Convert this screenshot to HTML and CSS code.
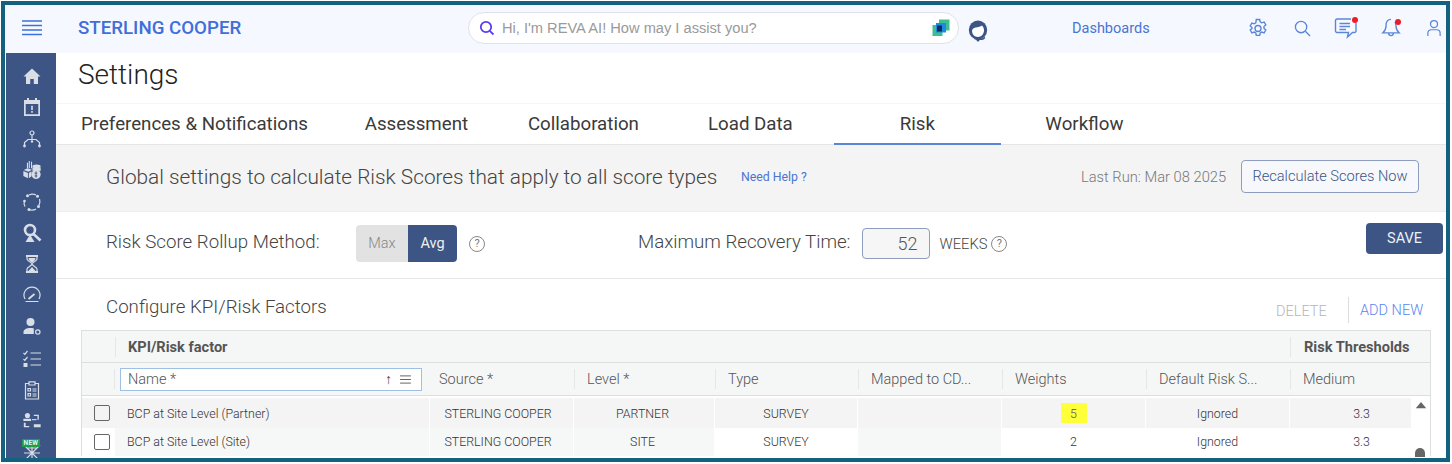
FILE: index.html
```html
<!DOCTYPE html>
<html lang="en">
<head>
<meta charset="utf-8">
<title>Settings</title>
<link rel="stylesheet" href="styles.css">
</head>
<body>
<div class="frame">
  <header class="topbar">
    <svg class="burger" viewBox="0 0 20 16"><path d="M0 1h20M0 5.500h20M0 10h20M0 14.500h20"/></svg>
    <div class="brand">STERLING COOPER</div>
    <div class="search">
      <svg class="search-q" viewBox="0 0 16 16"><circle cx="7" cy="7" r="5.200"/><path d="M10.800 10.800L14.500 14.500"/></svg>
      <span class="search-text">Hi, I'm REVA AI! How may I assist you?</span>
      <svg class="search-logo" viewBox="0 0 18 18"><rect x="0.500" y="6" width="10" height="11" fill="#3fbf8f"/><rect x="7" y="0.500" width="10.500" height="11" fill="#3fbf8f"/><rect x="4" y="4" width="10" height="9.500" fill="#1e88e5"/><rect x="5" y="6.500" width="5" height="6" fill="#0d2b5c"/></svg>
    </div>
    <svg class="agent" viewBox="0 0 20 22"><ellipse cx="10" cy="10" rx="9.200" ry="9.500" fill="#3c5585"/><path fill="#fff" d="M4 11c0-2 1.500-3.300 3.500-3.600 2.800-.4 5-1 6.500-2 1.500 1.500 2.200 3.500 2 5.600-.3 3-2.800 6-6 6-3.500 0-6-3-6-6z"/><path fill="#3c5585" d="M6 20h8c1.500 0 2.800-1 3.300-2.500l-1.300-.7c-.5 1-1.400 1.700-2.500 1.700H10z"/><circle cx="10" cy="20" r="1.500" fill="#3c5585"/></svg>
    <a class="dash">Dashboards</a>
    <div class="top-icons">
      <svg class="ti gear" viewBox="0 0 20 20"><path d="M8.300 1.500h3.400l.5 2.400 1.600.9 2.300-.8 1.700 2.900-1.800 1.600v1.900l1.800 1.600-1.700 2.900-2.300-.8-1.600.9-.5 2.400H8.300l-.5-2.400-1.600-.9-2.300.8-1.700-2.900 1.800-1.600V9.500L2.200 7.900l1.700-2.900 2.300.8 1.600-.9z"/><circle cx="10" cy="10.500" r="3"/></svg>
      <svg class="ti mag" viewBox="0 0 18 18"><circle cx="7.500" cy="7.500" r="6"/><path d="M12 12l5 5"/></svg>
      <span class="ti-wrap chat">
        <svg class="ti" viewBox="0 0 24 22"><path d="M17 2H3a1.500 1.500 0 0 0-1.500 1.500V14A1.500 1.500 0 0 0 3 15.500h11.500l-1 4.500 5-4.500h2A1.500 1.500 0 0 0 22 14V6M5.500 6.500H16M5.500 9.500H16M5.500 12.500H12"/></svg>
        <i class="dot"></i>
      </span>
      <span class="ti-wrap bell">
        <svg class="ti" viewBox="0 0 20 22"><path d="M10 1.500C6.500 1.500 4.800 4.500 4.800 8c0 3.500-1 5.500-3.300 7.500h17c-2.300-2-3.300-4-3.300-7.500 0-1.500-.3-2.800-1-4M7.500 15.700c0 3.600 5 3.600 5 0"/></svg>
        <i class="dot"></i>
      </span>
      <svg class="ti user" viewBox="0 0 16 20"><circle cx="8" cy="5.500" r="4"/><path d="M1 19v-3c0-2.500 2-4 4-4h6c2 0 4 1.500 4 4v3"/></svg>
    </div>
  </header>

  <div class="body">
    <nav class="sidebar">
      <svg viewBox="0 0 20 20"><path class="f" d="M10 2.500L1.500 10.500H4V18h4.200v-5h3.600v5H16v-7.500h2.500z"/></svg>
      <svg viewBox="0 0 20 20"><path class="f" d="M5 1h2v2h6V1h2v2h3v16H2V3h3zM3.700 7v10.300h12.600V7z"/><path class="f" d="M9.200 8.800h1.600v4.200H9.200zM9.200 14h1.600v1.800H9.200z"/></svg>
      <svg viewBox="0 0 20 20"><circle class="s" cx="10" cy="4" r="2"/><path class="s" d="M10 6v4M2.500 16v-2.500L6 10.500h8l3.500 3v2.500"/><circle class="f" cx="2.500" cy="17" r="1.400"/><circle class="f" cx="10" cy="12.500" r="1.200"/><circle class="f" cx="17.500" cy="17" r="1.400"/></svg>
      <svg viewBox="0 0 22 22"><path class="s" d="M8 1v8M10.500 2v7M6 3v6"/><ellipse class="f" cx="16" cy="7" rx="4.500" ry="2"/><path class="f" d="M11.500 8v4h9V8z"/><path class="f" d="M6 9l5 1.800-4 2.200-5-2zM1.500 12l5 2.200V20l-5-2.500zM7.500 14.200l3-1.700v5.500l-3 2z"/><circle class="f" cx="15.500" cy="16" r="5"/><path class="b" d="M15.500 12.500v7M13.800 14.500h3M13.800 17.500h3"/></svg>
      <svg viewBox="0 0 20 20"><path class="s" d="M7 3a8 8 0 0 1 7 0M17.500 7a8 8 0 0 1-.5 6.500M14 17a8 8 0 0 1-7 .500M3 14.500a8 8 0 0 1-.5-6"/><circle class="f" cx="5.500" cy="3.800" r="1.500"/><circle class="f" cx="15.500" cy="4.300" r="1.500"/><circle class="f" cx="16.500" cy="14.500" r="1.500"/><circle class="f" cx="7" cy="17.500" r="1.500"/><circle class="f" cx="2.500" cy="9" r="1.300"/></svg>
      <svg viewBox="0 0 20 20"><circle class="thick" cx="8" cy="7" r="5"/><path class="thick" d="M11.500 11l7 6.500"/><path class="f" d="M8 11.500l4.500 7.500h-9z"/></svg>
      <svg viewBox="0 0 20 20"><path class="thick2" d="M4 2h12M4 18h12"/><path class="s" d="M5 2v3c0 2 5 3.500 5 5s-5 3-5 5v3M15 2v3c0 2-5 3.500-5 5s5 3 5 5v3"/><path class="f" d="M6 17.500L10 13l4 4.500z"/><path class="f" d="M6.500 4h7c0 2-2 3.500-3.500 4.500C8.500 7.500 6.500 6 6.500 4z"/></svg>
      <svg viewBox="0 0 20 20"><path class="s" d="M3 13a8 8 0 1 1 14 0M3.500 15.500h13"/><path class="thick2" d="M6.500 13l6-5"/></svg>
      <svg viewBox="0 0 20 20"><circle class="f" cx="8.500" cy="5" r="4"/><path class="f" d="M1.500 17v-2c0-2.500 3-4 7-4 1.200 0 2.200.1 3.300.4V17z"/><circle class="s" cx="15.800" cy="15" r="2.200"/></svg>
      <svg viewBox="0 0 20 20"><path class="s" d="M8.500 4H19M8.500 10H19M8.500 16H19M1.500 4l1.300 1.300L5.500 2M1.500 10l1.300 1.300L5.500 8"/><rect class="f" x="1.500" y="14" width="4" height="4"/></svg>
      <svg viewBox="0 0 20 20"><path class="s" d="M7 3.500H3.500V19h13V3.500H13M7 1.800h6V5H7zM6 8.500h2.500V11H6zM10.500 9h4M10.500 11h4M6 13.500h2.500V16H6zM10.500 14h4M10.500 16h4"/></svg>
      <svg viewBox="0 0 22 20"><circle class="f" cx="6" cy="4" r="2.800"/><path class="f" d="M1.500 7.500h8.500v2.500H1.500zM13 3h5.500v5.500H17V4.500h-4zM2 12h2v3.500h4V17H2zM13 13.500h7.500V17H13z"/><path class="s" d="M11 8.500h5"/></svg>
      <span class="new-item">
        <b class="new">NEW</b>
        <svg viewBox="0 0 20 20"><path class="s" d="M2 2l16 16M18 2L2 18M2 10h16M5 5l10 0M10 2v16"/></svg>
      </span>
    </nav>

    <main class="main">
      <h1 class="title">Settings</h1>
      <div class="tabs">
        <div class="tab first">Preferences &amp; Notifications</div>
        <div class="tab">Assessment</div>
        <div class="tab">Collaboration</div>
        <div class="tab">Load Data</div>
        <div class="tab active">Risk</div>
        <div class="tab">Workflow</div>
      </div>

      <section class="band">
        <span class="band-title">Global settings to calculate Risk Scores that apply to all score types</span>
        <a class="help">Need Help ?</a>
        <span class="last-run">Last Run: Mar 08 2025</span>
        <button class="recalc">Recalculate Scores Now</button>
      </section>

      <section class="rollup">
        <span class="label">Risk Score Rollup Method:</span>
        <div class="seg"><span class="seg-off">Max</span><span class="seg-on">Avg</span></div>
        <span class="q q-a">?</span>
        <span class="label recovery">Maximum Recovery Time:</span>
        <span class="num">52</span>
        <span class="weeks">WEEKS</span>
        <span class="q q-b">?</span>
        <button class="save">SAVE</button>
      </section>

      <section class="config">
        <div class="config-head">
          <h2 class="config-title">Configure KPI/Risk Factors</h2>
          <span class="del">DELETE</span>
          <span class="add">ADD NEW</span>
        </div>
        <div class="grid">
          <div class="group-row">
            <span class="gcell-check"></span>
            <span class="group-name">KPI/Risk factor</span>
            <span class="group-risk">Risk Thresholds</span>
          </div>
          <div class="row filter-row">
            <span class="c0"></span>
            <span class="name-filter"><span>Name *</span><span class="sort">↑<svg class="menu" viewBox="0 0 12 10"><path d="M0 1h12M0 5h12M0 9h12"/></svg></span></span>
            <span class="fh fh-source">Source *</span>
            <span class="fh">Level *</span>
            <span class="fh">Type</span>
            <span class="fh">Mapped to CD...</span>
            <span class="fh">Weights</span>
            <span class="fh">Default Risk S...</span>
            <span class="fh">Medium</span>
            <span class="sb-head"></span>
          </div>
          <div class="row data gray">
            <span class="c0"><i class="box"></i></span>
            <span class="d name">BCP at Site Level (Partner)</span>
            <span class="d src">STERLING COOPER</span>
            <span class="d lvl">PARTNER</span>
            <span class="d">SURVEY</span>
            <span class="d"></span>
            <span class="d"><mark class="hl">5</mark></span>
            <span class="d">Ignored</span>
            <span class="d med">3.3</span>
            <span class="sb"><svg viewBox="0 0 12 8" class="up"><path d="M6 0l6 7H0z"/></svg></span>
          </div>
          <div class="row data second">
            <span class="c0"><i class="box"></i></span>
            <span class="d name tint">BCP at Site Level (Site)</span>
            <span class="d src tint">STERLING COOPER</span>
            <span class="d lvl tint">SITE</span>
            <span class="d">SURVEY</span>
            <span class="d tint"></span>
            <span class="d">2</span>
            <span class="d">Ignored</span>
            <span class="d med">3.3</span>
            <span class="sb"><i class="thumb"></i></span>
          </div>
        </div>
      </section>
    </main>
  </div>
</div>
</body>
</html>
```
FILE: styles.css
```css
* { box-sizing: border-box; }
html, body { margin: 0; padding: 0; background: #fff; }
body { width: 1452px; height: 464px; overflow: hidden; font-family: Roboto, "Liberation Sans", sans-serif; padding: 1px 2px 2px 1px; }
.frame { width: 1449px; height: 461px; border: 4px solid #14607f; overflow: hidden; background: #fff; display: flex; flex-direction: column; }

.topbar { height: 48px; flex: none; background: #f5f8ff; display: flex; align-items: center; padding-bottom: 2px; }
.burger { width: 20px; height: 16px; margin-left: 17px; fill: none; stroke: #3f6fd8; stroke-width: 1.300; }
.brand { margin-left: 36px; width: 390px; font-size: 18.700px; font-weight: 500; color: #3f6fd8; }
.search { width: 491px; height: 32px; background: #fff; border: 1px solid #dfe2ea; border-radius: 16px; display: flex; align-items: center; padding: 0 10px; }
.search-q { width: 16px; height: 16px; fill: none; stroke: #5b3df0; stroke-width: 1.800; flex: none; }
.search-text { margin-left: 7px; font-family: "Liberation Sans", sans-serif; font-size: 14.650px; color: #9a9a9a; flex: 1; }
.search-logo { width: 18px; height: 18px; margin-right: -2px; }
.agent { width: 20px; height: 22px; margin-left: 9px; margin-top: 5px; }
.dash { margin-left: 84px; font-size: 14.500px; color: #4a74d0; width: 108px; }
.top-icons { display: flex; align-items: center; }
.ti { fill: none; stroke: #5b86d8; stroke-width: 1.400; display: block; }
.gear { width: 20px; height: 20px; margin-left: 68px; }
.mag { width: 17px; height: 17px; margin-left: 26px; }
.ti-wrap { display: block; position: relative; }
.chat { margin-left: 23px; }
.chat .ti { width: 24px; height: 22px; }
.bell { margin-left: 23px; }
.bell .ti { width: 20px; height: 21px; }
.user { width: 14px; height: 18px; margin-left: 26px; }
.dot { position: absolute; width: 6px; height: 6px; border-radius: 50%; background: #ec1c2a; }
.chat .dot { right: 0; top: 0; }
.bell .dot { right: 0; top: 1px; }

.body { flex: 1; display: flex; min-height: 0; }
.sidebar { width: 50px; margin-left: 1px; flex: none; background: #3c5585; display: flex; flex-direction: column; align-items: center; padding: 13px 0 0 1px; gap: 11.400px; overflow: hidden; }
.sidebar svg { width: 20px; height: 20px; flex: none; display: block; }
.sidebar .f { fill: #d9dde6; stroke: none; }
.sidebar .s { fill: none; stroke: #d9dde6; stroke-width: 1.200; }
.sidebar .b { fill: none; stroke: #3c5585; stroke-width: 1; }
.sidebar .thick { fill: none; stroke: #d9dde6; stroke-width: 2.600; }
.sidebar .thick2 { fill: none; stroke: #d9dde6; stroke-width: 1.800; }
.new-item { position: relative; display: block; width: 20px; height: 20px; }
.new { position: absolute; z-index: 1; left: 0; top: -4px; background: #1f9d4d; color: #e8f5e8; font-size: 6.500px; line-height: 8px; padding: 0 2px; font-weight: 700; letter-spacing: .3px; }

.main { flex: 1; min-width: 0; }
.title { margin: 0; height: 51px; font-size: 28px; font-weight: 300; color: #222; line-height: 44px; padding-left: 22px; border-bottom: 1px solid #f6f6f6; }
.tabs { display: flex; height: 41px; border-bottom: 1px solid #e6e6e6; }
.tab { min-width: 167px; padding: 0 25px; text-align: center; font-size: 18.700px; color: #3a3a3a; line-height: 41px; height: 41px; }
.tab.active { border-bottom: 2px solid #5b86d8; }

.band { height: 67px; background: #f4f4f4; display: flex; align-items: center; padding-left: 50px; padding-bottom: 2px; border-bottom: 1px solid #eee; }
.band-title { font-size: 20.800px; font-weight: 300; color: #444; width: 635px; }
.help { font-size: 12.300px; color: #4a74d0; width: 340px; }
.last-run { font-size: 14.700px; font-weight: 300; color: #777; width: 160px; }
.recalc { width: 178px; height: 33px; background: #f7f8fb; border: 1px solid #8e9cbd; border-radius: 4px; font: 300 14.600px Roboto, sans-serif; color: #3c5585; padding: 0; margin-top: -2px; }

.rollup { height: 67px; display: flex; align-items: center; padding-left: 50px; border-bottom: 1px solid #e6e6e6; position: relative; }
.label { font-size: 18.700px; font-weight: 300; color: #444; }
.rollup > .label:first-child { width: 250px; margin-top: -7px; }
.seg { display: flex; height: 37px; width: 101px; font-size: 14.500px; font-weight: 300; border-radius: 4px; overflow: hidden; margin-top: -4px; }
.seg-off { width: 52px; background: #e2e2e2; color: #888; display: flex; align-items: center; justify-content: center; }
.seg-on { width: 49px; background: #3c5585; color: #f0f0f0; display: flex; align-items: center; justify-content: center; font-weight: 400; }
.q { width: 16px; height: 16px; border: 1px solid #888; border-radius: 50%; font-size: 11px; color: #777; display: flex; align-items: center; justify-content: center; flex: none; }
.q-a { margin-left: 12px; margin-top: -3px; }
.recovery { margin-left: 153px; margin-top: -7px; }
.num { width: 68px; height: 31px; margin-left: 11px; border: 1px solid #8e9cbd; border-radius: 4px; background: #f6f6f6; font-size: 18px; font-weight: 300; color: #555; text-align: right; padding-right: 11px; line-height: 30px; margin-top: -3px; }
.weeks { margin-left: 10px; font-size: 14.700px; font-weight: 300; color: #444; margin-top: -3px; }
.q-b { margin-left: 4px; margin-top: -3px; }
.save { position: absolute; left: 1310px; top: 11px; width: 77px; height: 31px; background: #3c5585; color: #eef0f5; border: 0; border-radius: 4px; font: 400 14.500px Roboto, sans-serif; padding: 0; }

.config-head { height: 51px; display: flex; align-items: center; padding-left: 50px; }
.config-title { margin: 0; width: 1170px; font-size: 18.700px; font-weight: 300; color: #444; margin-top: 4px; }
.del { font-size: 14.500px; font-weight: 300; color: #b5b5b5; width: 72px; padding-top: 14px; }
.add { font-size: 14.500px; font-weight: 300; color: #5b86f0; border-left: 1px solid #ddd; padding: 5px 0 3px 11px; line-height: 18px; margin-top: 10px; }

.grid { margin-left: 25px; width: 1350px; border: 1px solid #dcdedf; border-bottom: 0; background: #fff; }
.group-row { height: 32px; background: #f5f7f7; border-bottom: 1px solid #dcdedf; display: flex; align-items: center; font-size: 14.600px; font-weight: 700; color: #555; }
.gcell-check { width: 34px; height: 20px; border-right: 1px solid #e5e7e7; flex: none; }
.group-name { margin-left: 12px; width: 1162px; }
.group-risk { white-space: nowrap; border-left: 1px solid #e5e7e7; padding-left: 13px; line-height: 20px; }
.row { display: grid; grid-template-columns: 33px 315px 144px 141px 143px 144px 144px 144px 122px 18px; }
.filter-row { height: 33px; background: #f5f7f7; border-bottom: 1px solid #dcdedf; align-items: center; font-size: 14.500px; font-weight: 300; color: #555; }
.filter-row .c0 { height: 20px; border-right: 1px solid #e5e7e7; }
.name-filter { margin-left: 5px; width: 302px; height: 23px; background: #fff; border: 1px solid #9fc0e5; display: flex; align-items: center; justify-content: space-between; padding: 0 10px 0 7px; }
.sort { display: flex; align-items: center; gap: 8px; font-size: 14px; color: #444; font-weight: 400; }
.menu { width: 11px; height: 9px; stroke: #555; fill: none; stroke-width: 1; }
.fh { padding-left: 12px; height: 20px; line-height: 22px; border-left: 1px solid #e5e7e7; white-space: nowrap; overflow: hidden; }
.fh-source { border-left: 0; padding-left: 9px; }
.sb-head { height: 100%; }
.data { height: 30px; margin-top: 2px; font-size: 12.400px; font-weight: 300; color: #333; align-items: stretch; }
.second { height: 28px; margin-top: 0; }
.second .d { padding-bottom: 1px; }
.gray .d { background: #f4f4f4; }
.d { display: flex; align-items: center; justify-content: center; border-right: 1px solid #fff; }
.d.tint { background: #f6f7f7; }
.d.name { justify-content: flex-start; padding-left: 12px; font-weight: 300; }
.d.src { padding-right: 7px; }
.d.lvl { padding-right: 3px; }
.d.med { padding-left: 22px; }
.c0 { display: flex; align-items: center; justify-content: center; padding-left: 6px; }
.gray .c0 { background: #f4f4f4; }
.filter-row .c0 { padding-left: 0; }
.box { width: 16px; height: 16px; border: 1.500px solid #666; border-radius: 2px; background: #fff; display: block; }
.gray .box { background: #f4f4f4; }
.hl { background: #ffff3a; color: #555; width: 26px; height: 20px; display: flex; align-items: center; justify-content: center; }
.sb { display: flex; flex-direction: column; align-items: center; position: relative; }
.up { width: 12px; height: 7px; fill: #666; margin-top: 4px; }
.thumb { position: absolute; left: 3px; bottom: -1px; width: 10px; height: 9px; border-radius: 5px 5px 0 0; background: #666; }
```
